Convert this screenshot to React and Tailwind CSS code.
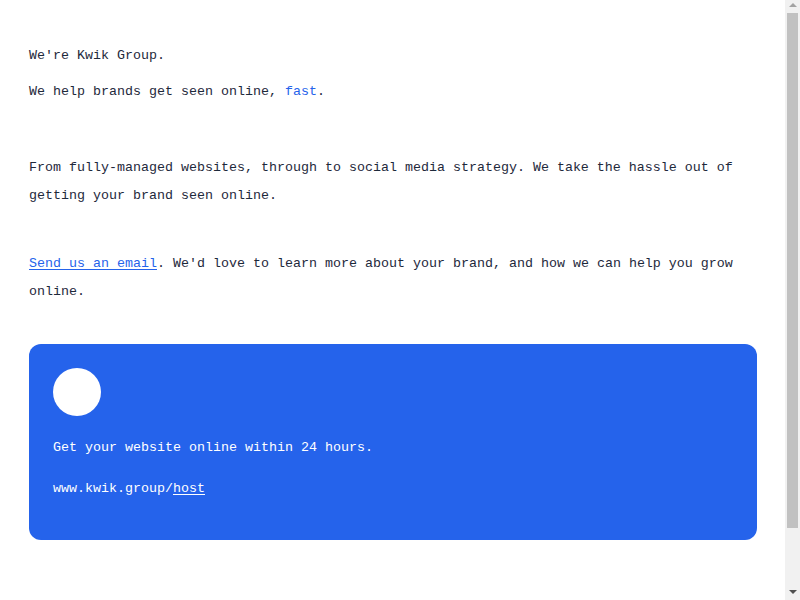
export default function App() {
  return (
    <div className="flex h-[600px] overflow-hidden bg-white text-[#1e293b] font-['Liberation_Mono',monospace] text-[13.33px] leading-[28px]">
      <main className="flex-1 pl-[29px] pr-[28px] pt-[42px] pb-[216px]">
        <p>We're Kwik Group.</p>
        <p className="mt-2">
          We help brands get seen online, <span className="text-[#2563eb]">fast</span>.
        </p>

        <p className="mt-12">
          From fully-managed websites, through to social media strategy. We take the hassle out of getting your brand seen online.
        </p>

        <p className="mt-10">
          <a href="#" className="text-[#2563eb] underline underline-offset-2">Send us an email</a>. We'd love to learn more about your brand, and how we can help you grow online.
        </p>

        {/* Host card */}
        <div className="mt-[38px] h-[196px] rounded-xl bg-[#2563eb] p-6 text-white">
          <div className="h-12 w-12 rounded-full bg-white"></div>
          <p className="mt-[18px]">Get your website online within 24 hours.</p>
          <p className="mt-[13px]">
            www.kwik.group/<a href="#" className="underline underline-offset-2">host</a>
          </p>
        </div>
      </main>

      {/* page scrollbar */}
      <div className="flex w-[15px] shrink-0 flex-col items-center bg-[#f1f1f1]">
        <div className="mt-[3px] h-0 w-0 border-x-4 border-b-4 border-x-transparent border-b-[#a3a3a3]"></div>
        <div className="mt-[6px] h-[515px] w-[11px] bg-[#c1c1c1]"></div>
        <div className="mt-auto mb-[6px] h-0 w-0 border-x-4 border-t-4 border-x-transparent border-t-[#505050]"></div>
      </div>
    </div>
  );
}
